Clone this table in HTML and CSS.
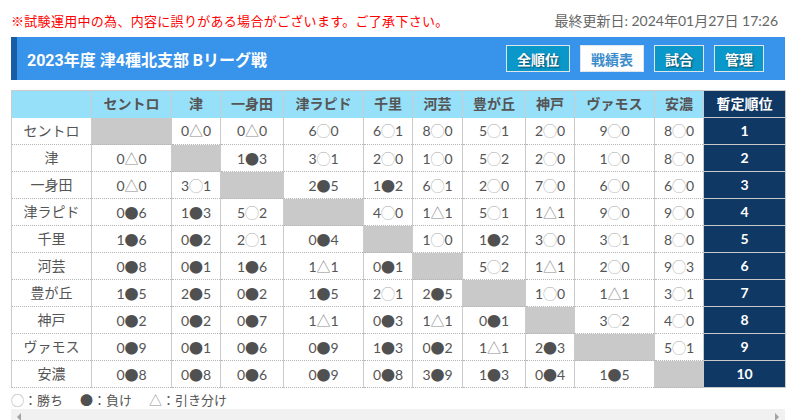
FILE: index.html
```html
<!DOCTYPE html>
<html lang="ja">
<head>
<meta charset="utf-8">
<title>戦績表</title>
<link rel="stylesheet" href="styles.css">
</head>
<body>
<div class="page">
  <div class="topline">
    <span class="notice">※試験運用中の為、内容に誤りがある場合がございます。ご了承下さい。</span>
    <span class="updated">最終更新日: 2024年01月27日 17:26</span>
  </div>
  <div class="titlebar">
    <h1 class="title">2023年度 津4種北支部 Bリーグ戦</h1>
    <nav class="btns">
      <a class="btn">全順位</a>
      <a class="btn active">戦績表</a>
      <a class="btn">試合</a>
      <a class="btn">管理</a>
    </nav>
  </div>
  <div class="scroller">
    <table class="grid">
      <colgroup>
        <col class="c80"><col class="c80"><col class="c49"><col class="c63"><col class="c80"><col class="c49"><col class="c50"><col class="c63"><col class="c49"><col class="c80"><col class="c49"><col class="c82">
      </colgroup>
      <thead>
        <tr><th></th><th>セントロ</th><th>津</th><th>一身田</th><th>津ラピド</th><th>千里</th><th>河芸</th><th>豊が丘</th><th>神戸</th><th>ヴァモス</th><th>安濃</th><th class="rank">暫定順位</th></tr>
      </thead>
      <tbody>
        <tr><td class="team">セントロ</td><td class="x"></td><td>0<i class="d">△</i>0</td><td>0<i class="d">△</i>0</td><td>6<i class="w">◯</i>0</td><td>6<i class="w">◯</i>1</td><td>8<i class="w">◯</i>0</td><td>5<i class="w">◯</i>1</td><td>2<i class="w">◯</i>0</td><td>9<i class="w">◯</i>0</td><td>8<i class="w">◯</i>0</td><td class="rank">1</td></tr>
        <tr><td class="team">津</td><td>0<i class="d">△</i>0</td><td class="x"></td><td>1<i class="l">●</i>3</td><td>3<i class="w">◯</i>1</td><td>2<i class="w">◯</i>0</td><td>1<i class="w">◯</i>0</td><td>5<i class="w">◯</i>2</td><td>2<i class="w">◯</i>0</td><td>1<i class="w">◯</i>0</td><td>8<i class="w">◯</i>0</td><td class="rank">2</td></tr>
        <tr><td class="team">一身田</td><td>0<i class="d">△</i>0</td><td>3<i class="w">◯</i>1</td><td class="x"></td><td>2<i class="l">●</i>5</td><td>1<i class="l">●</i>2</td><td>6<i class="w">◯</i>1</td><td>2<i class="w">◯</i>0</td><td>7<i class="w">◯</i>0</td><td>6<i class="w">◯</i>0</td><td>6<i class="w">◯</i>0</td><td class="rank">3</td></tr>
        <tr><td class="team">津ラピド</td><td>0<i class="l">●</i>6</td><td>1<i class="l">●</i>3</td><td>5<i class="w">◯</i>2</td><td class="x"></td><td>4<i class="w">◯</i>0</td><td>1<i class="d">△</i>1</td><td>5<i class="w">◯</i>1</td><td>1<i class="d">△</i>1</td><td>9<i class="w">◯</i>0</td><td>9<i class="w">◯</i>0</td><td class="rank">4</td></tr>
        <tr><td class="team">千里</td><td>1<i class="l">●</i>6</td><td>0<i class="l">●</i>2</td><td>2<i class="w">◯</i>1</td><td>0<i class="l">●</i>4</td><td class="x"></td><td>1<i class="w">◯</i>0</td><td>1<i class="l">●</i>2</td><td>3<i class="w">◯</i>0</td><td>3<i class="w">◯</i>1</td><td>8<i class="w">◯</i>0</td><td class="rank">5</td></tr>
        <tr><td class="team">河芸</td><td>0<i class="l">●</i>8</td><td>0<i class="l">●</i>1</td><td>1<i class="l">●</i>6</td><td>1<i class="d">△</i>1</td><td>0<i class="l">●</i>1</td><td class="x"></td><td>5<i class="w">◯</i>2</td><td>1<i class="d">△</i>1</td><td>2<i class="w">◯</i>0</td><td>9<i class="w">◯</i>3</td><td class="rank">6</td></tr>
        <tr><td class="team">豊が丘</td><td>1<i class="l">●</i>5</td><td>2<i class="l">●</i>5</td><td>0<i class="l">●</i>2</td><td>1<i class="l">●</i>5</td><td>2<i class="w">◯</i>1</td><td>2<i class="l">●</i>5</td><td class="x"></td><td>1<i class="w">◯</i>0</td><td>1<i class="d">△</i>1</td><td>3<i class="w">◯</i>1</td><td class="rank">7</td></tr>
        <tr><td class="team">神戸</td><td>0<i class="l">●</i>2</td><td>0<i class="l">●</i>2</td><td>0<i class="l">●</i>7</td><td>1<i class="d">△</i>1</td><td>0<i class="l">●</i>3</td><td>1<i class="d">△</i>1</td><td>0<i class="l">●</i>1</td><td class="x"></td><td>3<i class="w">◯</i>2</td><td>4<i class="w">◯</i>0</td><td class="rank">8</td></tr>
        <tr><td class="team">ヴァモス</td><td>0<i class="l">●</i>9</td><td>0<i class="l">●</i>1</td><td>0<i class="l">●</i>6</td><td>0<i class="l">●</i>9</td><td>1<i class="l">●</i>3</td><td>0<i class="l">●</i>2</td><td>1<i class="d">△</i>1</td><td>2<i class="l">●</i>3</td><td class="x"></td><td>5<i class="w">◯</i>1</td><td class="rank">9</td></tr>
        <tr><td class="team">安濃</td><td>0<i class="l">●</i>8</td><td>0<i class="l">●</i>8</td><td>0<i class="l">●</i>6</td><td>0<i class="l">●</i>9</td><td>0<i class="l">●</i>8</td><td>3<i class="l">●</i>9</td><td>1<i class="l">●</i>3</td><td>0<i class="l">●</i>4</td><td>1<i class="l">●</i>5</td><td class="x"></td><td class="rank">10</td></tr>
      </tbody>
    </table>
  </div>
  <div class="legend">
    <span><i class="w">◯</i>：勝ち</span>
    <span><i class="l">●</i>：負け</span>
    <span><i class="d">△</i>：引き分け</span>
  </div>
  <div class="hscroll">
    <span class="arrow left"></span>
    <span class="arrow right"></span>
  </div>
</div>
</body>
</html>
```

FILE: styles.css
```css
* { box-sizing: border-box; }
html, body { margin: 0; padding: 0; background: #fff; }
body {
  font-family: "Lato", "Noto Sans CJK JP", sans-serif;
  color: #555;
  font-size: 14px;
}
.page { padding: 0 8px 0 11px; }

.topline {
  display: flex;
  justify-content: space-between;
  align-items: center;
  padding: 11px 7px 0 0;
  height: 31px;
  line-height: 18px;
}
.notice { color: #f00; font-size: 13px; letter-spacing: 0.3px; }
.updated { color: #666; font-size: 14px; }

.titlebar {
  margin-top: 6px;
  height: 43px;
  background: #3893eb;
  border-left: 6px solid #175ea6;
  display: flex;
  align-items: center;
  justify-content: space-between;
  padding: 0 21px 0 10px;
}
.title {
  margin: 0;
  color: #fff;
  font-size: 16px;
  font-weight: bold;
  font-family: "Roboto", "Noto Sans CJK JP", sans-serif;
}
.btns { display: flex; gap: 10px; }
.btn {
  display: flex;
  align-items: center;
  justify-content: center;
  height: 27px;
  padding: 0 10px;
  background: #0a98cb;
  border: 1px solid #dfe6ea;
  color: #fff;
  font-weight: bold;
  font-size: 14px;
  text-shadow: 1px 1px 2px rgba(0, 0, 0, 0.55);
}
.btn.active {
  background: #fff;
  color: #3b8dcc;
  text-shadow: none;
}

.scroller { margin-top: 10px; }
.grid {
  border-collapse: collapse;
  table-layout: fixed;
  width: 774px;
}
.c80 { width: 80px; }
.c49 { width: 49px; }
.c50 { width: 50px; }
.c63 { width: 63px; }
.c82 { width: 82px; }

.grid th, .grid td {
  height: 27px;
  padding: 0;
  text-align: center;
  vertical-align: middle;
  border-left: 1px solid #cbcbcb;
  border-right: 1px solid #cbcbcb;
  white-space: nowrap;
  font-size: 14px;
  line-height: 18px;
}
.grid th {
  background: #97e0f9;
  color: #555;
  font-weight: bold;
  border-top: 1px solid #cbcbcb;
}
.grid td {
  border-bottom: 1px dotted #b5b5b5;
  color: #555;
}
.grid td.x { background: #c9c9c9; }
.grid .rank {
  background: #0f3864;
  color: #fff;
  font-weight: bold;
  border-bottom: 1px solid #c9c9c9;
}

i { font-style: normal; font-family: "Noto Sans CJK JP", sans-serif; }
i.w { color: #b0b0b0; }
i.l { color: #505050; }
i.d { color: #8a8a8a; }

.legend {
  display: flex;
  gap: 17px;
  height: 21px;
  align-items: center;
  padding-top: 2px;
  color: #555;
  font-size: 13px;
}
.legend i.w { color: #999; }

.hscroll {
  margin-top: 0;
  height: 14px;
  width: 774px;
  background: #f1f1f1;
  position: relative;
}
.arrow {
  position: absolute;
  top: 4px;
  width: 0; height: 0;
  border-top: 4px solid transparent;
  border-bottom: 4px solid transparent;
}
.arrow.left { left: 6px; border-right: 4px solid #a3a3a3; }
.arrow.right { right: 6px; border-left: 4px solid #a3a3a3; }
```
